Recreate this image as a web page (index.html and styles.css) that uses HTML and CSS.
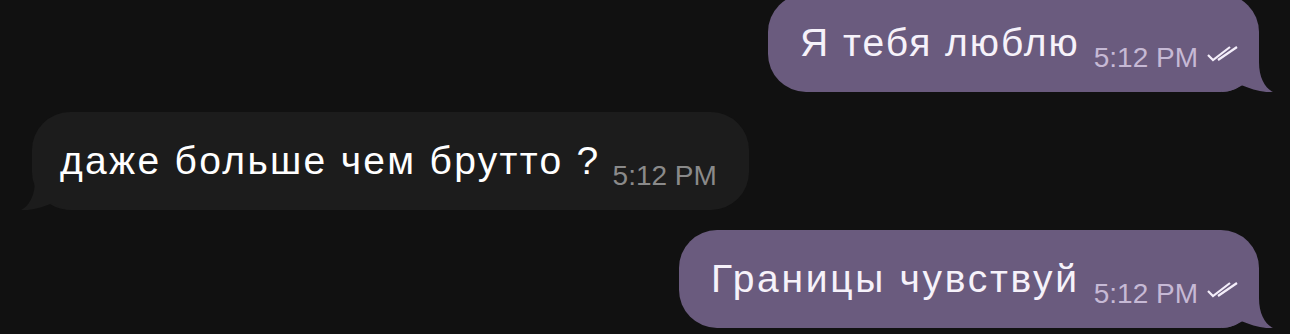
FILE: index.html
```html
<!DOCTYPE html>
<html lang="ru">
<head>
  <meta charset="UTF-8">
  <meta name="viewport" content="width=device-width, initial-scale=1.0">
  <title>Chat</title>
  <link rel="stylesheet" href="styles.css">
</head>
<body>
  <div class="chat">
    <div class="row out first">
      <div class="bubble">
        <span class="text">Я тебя люблю</span><span class="meta">5:12 PM</span><svg class="checks" viewBox="0 0 32 16" width="32" height="16"><path d="M1 9 L6 14 L23 1 M11 14 L30 1" /></svg>
        <svg class="tail" viewBox="0 0 52 45" width="52" height="45"><path d="M0 0 H37 V15 C37 31 43 41 51 45 C41 46 29 42 19 38 C14 42 8 45 0 45 Z" /></svg>
      </div>
    </div>

    <div class="row in">
      <div class="bubble">
        <span class="text">даже больше чем брутто ?</span><span class="meta">5:12 PM</span>
        <svg class="tail" viewBox="0 0 52 45" width="52" height="45"><path d="M0 0 H37 V15 C37 31 43 41 51 45 C41 46 29 42 19 38 C14 42 8 45 0 45 Z" /></svg>
      </div>
    </div>

    <div class="row out">
      <div class="bubble">
        <span class="text text-wide">Границы чувствуй</span><span class="meta">5:12 PM</span><svg class="checks" viewBox="0 0 32 16" width="32" height="16"><path d="M1 9 L6 14 L23 1 M11 14 L30 1" /></svg>
        <svg class="tail" viewBox="0 0 52 45" width="52" height="45"><path d="M0 0 H37 V15 C37 31 43 41 51 45 C41 46 29 42 19 38 C14 42 8 45 0 45 Z" /></svg>
      </div>
    </div>
  </div>
</body>
</html>
```

FILE: styles.css
```css
body {
  margin: 0;
  background-color: #111111;
  font-family: "Liberation Sans", Arial, sans-serif;
  overflow: hidden;
}

.chat {
  display: flex;
  flex-direction: column;
  gap: 20px;
  margin-top: -6px;
}

.row {
  display: flex;
}

.row.out {
  justify-content: flex-end;
  padding-right: 31px;
}

.row.in {
  justify-content: flex-start;
  padding-left: 32px;
}

.bubble {
  position: relative;
  isolation: isolate;
  box-sizing: border-box;
  height: 98px;
  border-radius: 38px;
  padding-top: 27px;
  line-height: 44px;
  white-space: nowrap;
}

.out .bubble {
  background-color: #6a5b7e;
  padding-left: 32px;
  padding-right: 20px;
}

.in .bubble {
  background-color: #1c1c1c;
  padding-left: 28px;
  padding-right: 32px;
}

.text {
  font-size: 39px;
  letter-spacing: 2px;
  color: #f6f2fa;
}

.text-wide {
  letter-spacing: 2.7px;
}

.in .text {
  color: #ffffff;
  letter-spacing: 2.3px;
}

.meta {
  font-size: 28px;
  line-height: 1;
  vertical-align: -11px;
  margin-left: 14px;
}

.out .meta {
  color: #c6b9d5;
}

.in .meta {
  color: #8a8a8a;
  margin-left: 12px;
}

.checks {
  margin-left: 9px;
  vertical-align: -6px;
  fill: none;
  stroke: #f4eefa;
  stroke-width: 2.2;
}

.tail {
  position: absolute;
  z-index: -1;
  bottom: 0;
  right: -15px;
}

.out .tail {
  fill: #6a5b7e;
}

.in .tail {
  fill: #1c1c1c;
  right: auto;
  left: -12px;
  transform: scaleX(-1);
}
```
